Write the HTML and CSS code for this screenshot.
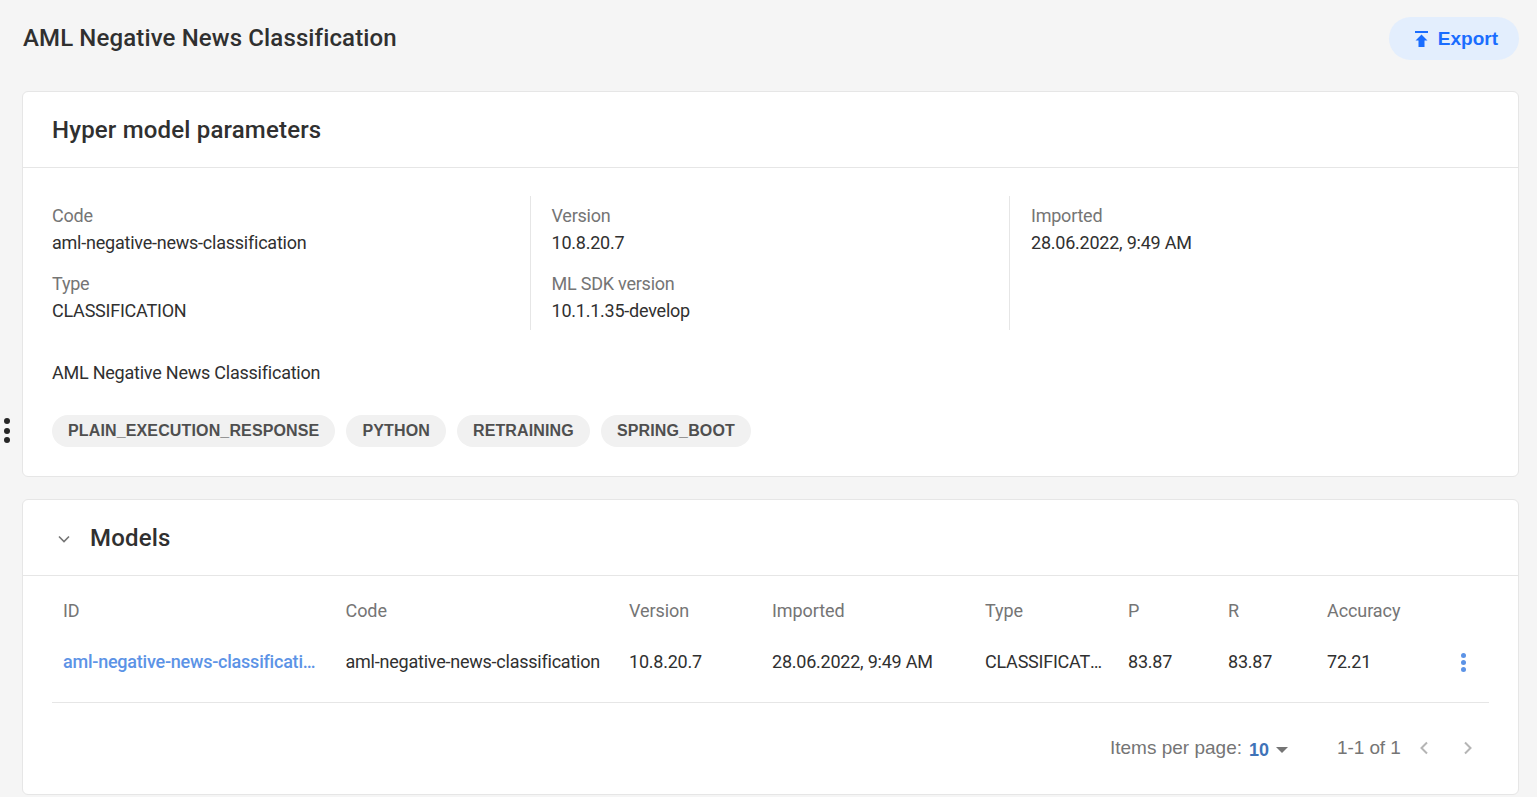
FILE: index.html
```html
<!DOCTYPE html>
<html lang="en">

<head>
    <meta charset="UTF-8">
    <title>AML Negative News Classification</title>
    <link rel="stylesheet" href="styles.css">
</head>

<body>
    <div class="side-dots"><i></i><i></i><i></i></div>
    <main class="page">
        <header class="top">
            <h1>AML Negative News Classification</h1>
            <button class="export">
                <svg width="13" height="16" viewBox="0 0 13 16"><path d="M0 0h13v2H0zM6.500 3.500l6 6H9.500V16h-6V9.500H.5z" fill="#1a6dff"/></svg>
                <span>Export</span>
            </button>
        </header>

        <section class="card params">
            <div class="card-head">
                <h2>Hyper model parameters</h2>
            </div>
            <div class="params-body">
                <div class="cols">
                    <div class="col">
                        <div class="field"><label>Code</label><p>aml-negative-news-classification</p></div>
                        <div class="field"><label>Type</label><p>CLASSIFICATION</p></div>
                    </div>
                    <div class="col">
                        <div class="field"><label>Version</label><p>10.8.20.7</p></div>
                        <div class="field"><label>ML SDK version</label><p>10.1.1.35-develop</p></div>
                    </div>
                    <div class="col">
                        <div class="field"><label>Imported</label><p>28.06.2022, 9:49 AM</p></div>
                    </div>
                </div>
                <p class="desc">AML Negative News Classification</p>
                <div class="chips">
                    <span class="chip">PLAIN_EXECUTION_RESPONSE</span>
                    <span class="chip">PYTHON</span>
                    <span class="chip">RETRAINING</span>
                    <span class="chip">SPRING_BOOT</span>
                </div>
            </div>
        </section>

        <section class="card models">
            <div class="card-head">
                <svg class="chevron" width="12" height="8" viewBox="0 0 12 8"><path d="M1 1.500l5 5 5-5" fill="none" stroke="#757575" stroke-width="1.600"/></svg>
                <h2>Models</h2>
            </div>
            <div class="table-wrap">
                <div class="row row-head">
                    <span>ID</span><span>Code</span><span>Version</span><span>Imported</span><span>Type</span><span>P</span><span>R</span><span>Accuracy</span><span></span>
                </div>
                <div class="row row-data">
                    <a class="cut" href="#">aml-negative-news-classification</a>
                    <span class="cut">aml-negative-news-classification</span>
                    <span>10.8.20.7</span>
                    <span>28.06.2022, 9:49 AM</span>
                    <span class="cut">CLASSIFICATION</span>
                    <span>83.87</span>
                    <span>83.87</span>
                    <span>72.21</span>
                    <span class="row-menu"><i></i><i></i><i></i></span>
                </div>
            </div>
            <div class="pager">
                <span class="pager-label">Items per page:</span>
                <span class="pager-size">10</span>
                <span class="caret"></span>
                <span class="pager-range">1-1 of 1</span>
                <svg class="pager-prev" width="10" height="14" viewBox="0 0 10 14"><path d="M8 1.500L2.500 7 8 12.500" fill="none" stroke="#b5b5b5" stroke-width="2"/></svg>
                <svg class="pager-next" width="10" height="14" viewBox="0 0 10 14"><path d="M2 1.500L7.500 7 2 12.500" fill="none" stroke="#b5b5b5" stroke-width="2"/></svg>
            </div>
        </section>
    </main>
</body>

</html>
```

FILE: styles.css
```css
* {
    margin: 0;
    padding: 0;
    box-sizing: border-box;
}

body {
    background-color: #f5f5f5;
    font-family: Roboto, "Liberation Sans", sans-serif;
    color: #303030;
    height: 797px;
    overflow: hidden;
}

.side-dots {
    position: absolute;
    left: 4px;
    top: 418px;
    display: flex;
    flex-direction: column;
    gap: 3.5px;
}

.side-dots i {
    width: 6px;
    height: 6px;
    border-radius: 50%;
    background-color: #262626;
}

.page {
    padding: 17px 18px 0 22px;
}

.top {
    height: 43px;
    display: flex;
    justify-content: space-between;
    align-items: center;
    margin-bottom: 31px;
}

h1 {
    font-size: 24px;
    font-weight: 500;
    color: #303030;
    letter-spacing: 0.13px;
    padding-left: 1px;
    margin-bottom: 2px;
}

.export {
    width: 130px;
    height: 43px;
    padding-right: 21px;
    border: none;
    border-radius: 22px;
    background-color: #e3eefd;
    color: #1a6dff;
    font-family: "Liberation Sans", sans-serif;
    font-size: 19px;
    font-weight: 700;
    display: flex;
    align-items: center;
    justify-content: flex-end;
    gap: 10px;
}

.card {
    background-color: #fff;
    border: 1px solid #e6e6e6;
    border-radius: 6px;
}

.card-head {
    height: 76px;
    padding: 0 29px;
    display: flex;
    align-items: center;
    border-bottom: 1px solid #e6e6e6;
}

h2 {
    font-size: 24px;
    font-weight: 500;
    color: #303030;
    letter-spacing: 0.18px;
}

.params {
    height: 386px;
    margin-bottom: 22px;
}

.params-body {
    padding: 28px 29px 0;
}

.cols {
    display: grid;
    grid-template-columns: 479px 479px 1fr;
    height: 134px;
}

.col {
    border-right: 1px solid #e6e6e6;
    padding-left: 21px;
}

.col:first-child {
    padding-left: 0;
}

.col:last-child {
    border-right: none;
}

.col:nth-child(2) {
    padding-left: 20.5px;
}

.field {
    height: 68px;
    padding-top: 9px;
    font-size: 18px;
    letter-spacing: -0.23px;
}

.field:last-child {
    height: 66px;
}

.field label {
    display: block;
    color: #757575;
    line-height: 21px;
    margin-bottom: 6px;
}

.field p {
    line-height: 21px;
}

.desc {
    font-size: 18px;
    line-height: 21px;
    letter-spacing: -0.23px;
    margin-top: 32px;
}

.chips {
    display: flex;
    gap: 11px;
    margin-top: 32px;
}

.chip {
    height: 32px;
    line-height: 32px;
    padding: 0 16px;
    border-radius: 16px;
    background-color: #f1f1f1;
    color: #4f4f4f;
    font-family: "Liberation Sans", sans-serif;
    font-size: 16px;
    font-weight: 700;
    letter-spacing: 0.14px;
}

.models {
    height: 296px;
}

.chevron {
    margin: 2px 20px 0 6px;
}

.table-wrap {
    margin: 0 29px;
}

.row {
    display: grid;
    grid-template-columns: 282.5px 283.5px 143px 213px 143px 100px 99px 120px 1fr;
    padding-left: 11px;
    font-size: 18px;
    letter-spacing: -0.23px;
    align-items: center;
}

.row-head {
    height: 68px;
    color: #757575;
    letter-spacing: -0.08px;
}

.row-data {
    height: 59px;
    padding-bottom: 23px;
    border-bottom: 1px solid #e6e6e6;
}

.cut {
    white-space: nowrap;
    overflow: hidden;
    text-overflow: ellipsis;
    padding-right: 27px;
}

.row-data a {
    color: #5c93e6;
    font-weight: 500;
    text-decoration: none;
}

.row-data .cut + .cut {
    padding-right: 0;
}

.row-data span:nth-child(5) {
    padding-right: 24px;
}

.row-menu {
    display: flex;
    flex-direction: column;
    gap: 2px;
    padding: 2px 0 0 14px;
}

.row-menu i {
    width: 5px;
    height: 5px;
    border-radius: 50%;
    background-color: #5c93e6;
}

.pager {
    height: 90px;
    display: flex;
    align-items: center;
    padding-left: 1087px;
    font-family: "Liberation Sans", sans-serif;
    font-size: 19px;
    color: #757575;
}

.pager-size {
    margin-left: 7px;
    font-size: 18px;
    font-weight: 700;
    color: #3f73b8;
    padding-top: 4px;
}

.caret {
    margin: 4px 0 0 7px;
    border-left: 6px solid transparent;
    border-right: 6px solid transparent;
    border-top: 6px solid #757575;
}

.pager-range {
    margin-left: 49px;
    letter-spacing: -0.1px;
}

.pager-prev {
    margin-left: 18px;
}

.pager-next {
    margin-left: 34px;
}
```
